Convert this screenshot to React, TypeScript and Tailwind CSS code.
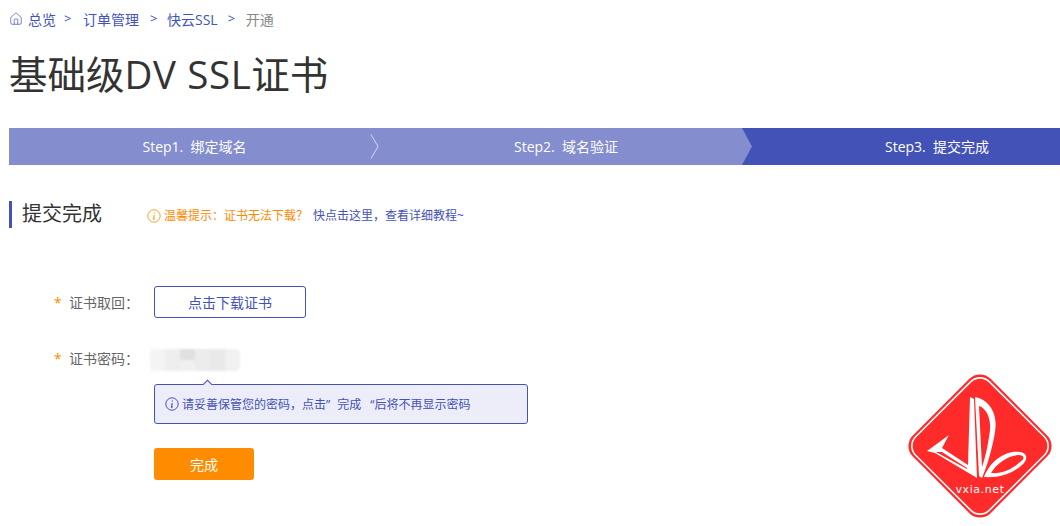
import React from "react";
import { Home } from "lucide-react";

const steps = [
  { label: "Step1.", name: "绑定域名" },
  { label: "Step2.", name: "域名验证" },
  { label: "Step3.", name: "提交完成" },
];

function InfoIcon({ color, size = 14 }: { color: string; size?: number }) {
  return (
    <svg width={size} height={size} viewBox="0 0 14 14" fill="none" className="shrink-0">
      <circle cx="7" cy="7" r="6.2" stroke={color} strokeWidth="1" />
      <path d="M7.4 3.4v1.2M7.2 6l-.7 4.2h1.2" stroke={color} strokeWidth="1.2" />
    </svg>
  );
}

function Logo() {
  return (
    <svg width="160" height="160" viewBox="0 0 160 160" className="absolute left-[900px] top-[366px]">
      <rect x="25" y="25" width="110" height="110" rx="15" transform="rotate(45 80 80)" fill="#ff2a2a" />
      <rect x="28" y="28" width="104" height="104" rx="13" transform="rotate(45 80 80)" fill="none" stroke="#fff" strokeWidth="1.6" />
      {/* arrow and stem */}
      <path d="M27 85 L49 69 L42 82 L68 99 L70 31 L74 33 L77 112 L72 109 L35 87 Z" fill="#fff" />
      <path d="M36 86 L42 86 L67 102 L67 103 Z" fill="#ff2a2a" />
      {/* D shape */}
      <path d="M75 31 C91 34 98 50 95 66 C92 84 87 100 82 112 L79 110 Z" fill="#fff" />
      <path d="M79 40 C86 42 91 52 90 64 C88 80 85 92 82 101 Z" fill="#ff2a2a" />
      {/* leaf */}
      <path d="M84 111 C90 95 106 84 120 86 C128 87 128 94 122 99 C112 108 98 112 84 111 Z" fill="#fff" />
      <path d="M91 107 C97 97 108 90 118 89 C125 89 125 93 120 96 C111 104 101 108 91 107 Z" fill="#ff2a2a" />
      <text x="80" y="127" textAnchor="middle" fill="#fff" fontSize="11" letterSpacing="0.6" fontFamily="'DejaVu Sans', sans-serif">
        vxia.net
      </text>
    </svg>
  );
}

export default function App() {
  return (
    <div className="relative h-[526px] w-[1060px] overflow-hidden bg-white font-['Open_Sans','Noto_Sans_CJK_SC',sans-serif] text-[#333]">
      {/* breadcrumb */}
      <div className="flex h-[38px] items-center pl-[9px] text-[14px] text-[#4352b6]">
        <Home size={14} strokeWidth={1.2} className="mr-[5px]" />
        <span>总览</span>
        <span className="ml-[8px] mr-[11px] w-[8px] text-[13px]">&gt;</span>
        <span>订单管理</span>
        <span className="ml-[11px] mr-[9px] w-[8px] text-[13px]">&gt;</span>
        <span>快云SSL</span>
        <span className="ml-[10px] mr-[10px] w-[8px] text-[13px]">&gt;</span>
        <span className="text-[#888]">开通</span>
      </div>

      <h1 className="ml-[9px] mt-[11px] h-[79px] text-[38.5px] leading-[50px] text-[#333]">
        基础级<span className="tracking-[0.6px]">DV SSL</span>证书
      </h1>

      {/* steps */}
      <div className="ml-[9px] flex h-[37px] pb-0 text-[14px] text-white">
        <div className="relative z-10 flex w-[371px] items-center justify-center bg-[#848dcd] pb-[1px]">
          <span>{steps[0].label}&nbsp; {steps[0].name}</span>
          <svg width="9" height="25" viewBox="0 0 9 25" fill="none" className="absolute right-[1px] top-[6px]">
            <path d="M1 0.5 L8 12.500 L1 24.500" stroke="#d5d8ee" strokeWidth="1" />
          </svg>
        </div>
        <div className="relative z-[5] flex w-[372px] items-center justify-center bg-[#848dcd] pb-[1px] [clip-path:polygon(0_0,362px_0,100%_50%,362px_100%,0_100%)]">
          <span>{steps[1].label}&nbsp; {steps[1].name}</span>
        </div>
        <div className="-ml-[10px] flex flex-1 items-center justify-center bg-[#4352b6] pb-[1px] pl-[72px]">
          <span>{steps[2].label}&nbsp; {steps[2].name}</span>
        </div>
      </div>

      {/* section head */}
      <div className="ml-[9px] mt-[36px] flex h-[27px] items-center">
        <div className="h-[27px] w-[3px] bg-[#4352b6]" />
        <div className="mb-[2px] ml-[10px] w-[125px] text-[20px] leading-[25px] text-[#333]">提交完成</div>
        <div className="mt-[3px] flex items-center text-[12px]">
          <InfoIcon color="#f5a030" />
          <span className="ml-[3px] text-[#ff8a00]">温馨提示：证书无法下载？</span>
          <span className="ml-[5px] text-[#4352b6]">快点击这里，查看详细教程~</span>
        </div>
      </div>

      {/* form */}
      <div className="mt-[58px] flex h-[32px] items-center">
        <div className="flex w-[154px] text-[14px] text-[#666]">
          <span className="ml-[54px] w-[15px] text-[#ff8a00]">*</span>
          <span>证书取回：</span>
        </div>
        <div className="flex h-[32px] w-[152px] items-center justify-center rounded-[3px] border border-[#4352b6] text-[14px] text-[#4352b6]">
          点击下载证书
        </div>
      </div>

      <div className="mt-[31px] flex h-[22px] items-center">
        <div className="mb-[3px] flex w-[150px] text-[14px] text-[#666]">
          <span className="ml-[54px] w-[15px] text-[#ff8a00]">*</span>
          <span>证书密码：</span>
        </div>
        <div className="flex h-[22px] w-[90px] overflow-hidden rounded-[5px] bg-[#f0f0f0] blur-[1px]">
          <div className="h-full w-[15px] bg-[#f4f4f4]" />
          <div className="h-full w-[15px] bg-[#eeeeee]" />
          <div className="h-[11px] w-[15px] bg-[#e0e0e0]" />
          <div className="h-full w-[15px] bg-[#ececec]" />
          <div className="h-full w-[15px] bg-[#e9e9e9]" />
          <div className="h-full w-[15px] bg-[#f1f1f1]" />
        </div>
      </div>

      <div className="relative ml-[154px] mt-[13px] flex h-[40px] w-[374px] items-center rounded-[3px] border border-[#4352b6] bg-[#ecedf8] pl-[10px] text-[12px] text-[#4352b6]">
        <div className="absolute left-[49px] top-[-4px] h-[7px] w-[7px] rotate-45 border-l border-t border-[#4352b6] bg-[#ecedf8]" />
        <InfoIcon color="#4352b6" />
        <span className="ml-[3px] mt-[1px]">
          请妥善保管您的密码，点击”<span className="ml-[7px]">完成</span><span className="ml-[9px]">“</span>后将不再显示密码
        </span>
      </div>

      <div className="ml-[154px] mt-[24px] flex h-[32px] w-[100px] items-center justify-center rounded-[3px] bg-[#ff8c00] text-[14px] text-white">
        完成
      </div>

      <Logo />
    </div>
  );
}
